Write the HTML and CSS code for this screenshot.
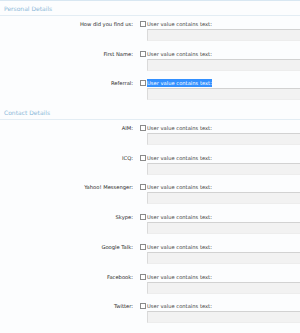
FILE: index.html
```html
<!DOCTYPE html>
<html lang="en">
  <head>
    <meta charset="UTF-8" />
    <title>User Criteria</title>
    <link rel="stylesheet" href="styles.css">
  </head>
  <body>
    <div class="top-edge"></div>

    <div class="section">
      <h3 class="section-title">Personal Details</h3>

      <dl class="ctrl">
        <dt>How did you find us:</dt>
        <dd>
          <label class="check"><input type="checkbox" />User value contains text:</label>
          <input type="text" class="text-box" />
        </dd>
      </dl>
      <dl class="ctrl">
        <dt>First Name:</dt>
        <dd>
          <label class="check"><input type="checkbox" />User value contains text:</label>
          <input type="text" class="text-box" />
        </dd>
      </dl>
      <dl class="ctrl">
        <dt>Referral:</dt>
        <dd>
          <label class="check"><input type="checkbox" /><span class="selected">User value contains text:</span></label>
          <input type="text" class="text-box" />
        </dd>
      </dl>
    </div>

    <div class="section">
      <h3 class="section-title">Contact Details</h3>

      <dl class="ctrl">
        <dt>AIM:</dt>
        <dd>
          <label class="check"><input type="checkbox" />User value contains text:</label>
          <input type="text" class="text-box" />
        </dd>
      </dl>
      <dl class="ctrl">
        <dt>ICQ:</dt>
        <dd>
          <label class="check"><input type="checkbox" />User value contains text:</label>
          <input type="text" class="text-box" />
        </dd>
      </dl>
      <dl class="ctrl">
        <dt>Yahoo! Messenger:</dt>
        <dd>
          <label class="check"><input type="checkbox" />User value contains text:</label>
          <input type="text" class="text-box" />
        </dd>
      </dl>
      <dl class="ctrl">
        <dt>Skype:</dt>
        <dd>
          <label class="check"><input type="checkbox" />User value contains text:</label>
          <input type="text" class="text-box" />
        </dd>
      </dl>
      <dl class="ctrl">
        <dt>Google Talk:</dt>
        <dd>
          <label class="check"><input type="checkbox" />User value contains text:</label>
          <input type="text" class="text-box" />
        </dd>
      </dl>
      <dl class="ctrl">
        <dt>Facebook:</dt>
        <dd>
          <label class="check"><input type="checkbox" />User value contains text:</label>
          <input type="text" class="text-box" />
        </dd>
      </dl>
      <dl class="ctrl">
        <dt>Twitter:</dt>
        <dd>
          <label class="check"><input type="checkbox" />User value contains text:</label>
          <input type="text" class="text-box" />
        </dd>
      </dl>
    </div>
  </body>
</html>
```

FILE: styles.css
```css
html,
body {
  margin: 0;
  padding: 0;
  overflow: hidden;
  background-color: #fcfdfe;
}

body {
  font-family: "DejaVu Sans", Verdana, sans-serif;
  font-size: 5.2px;
  color: #333;
}

.top-edge {
  height: 1px;
  background-color: #d8e7f2;
  margin-bottom: 3px;
}

.section-title {
  margin: 0 0 3px 0;
  padding: 0 4px;
  height: 12px;
  box-sizing: border-box;
  line-height: 10px;
  font-size: 6px;
  font-weight: normal;
  color: #8db9d9;
  border-bottom: 1px solid #e3edf4;
}

.ctrl {
  display: grid;
  grid-template-columns: 137px 1fr;
  margin: 0 0 7.7px 0;
}

.ctrl dt {
  text-align: right;
  padding-right: 4px;
  line-height: 10px;
  color: #2a2a2a;
}

.ctrl dd {
  margin: 0;
  min-width: 0;
}

.check {
  display: flex;
  align-items: center;
  height: 10px;
  margin-left: 3px;
  color: #444;
}

.check input {
  appearance: none;
  -webkit-appearance: none;
  width: 6px;
  height: 6px;
  margin: 0 1px 0 0;
  border: 1px solid #8a8a8a;
  background: #fff;
  box-sizing: border-box;
}

.selected {
  background-color: #3390ff;
  color: white;
  line-height: 8px;
}

.text-box {
  display: block;
  margin: 0 0 0 10px;
  padding: 0;
  width: calc(100% - 10px);
  height: 12px;
  box-sizing: border-box;
  border: 1px solid;
  border-right: none;
  border-color: #d2d2d2 #e6e6e6 #ededed #dadada;
  background-color: #f2f2f2;
  outline: none;
}
```
